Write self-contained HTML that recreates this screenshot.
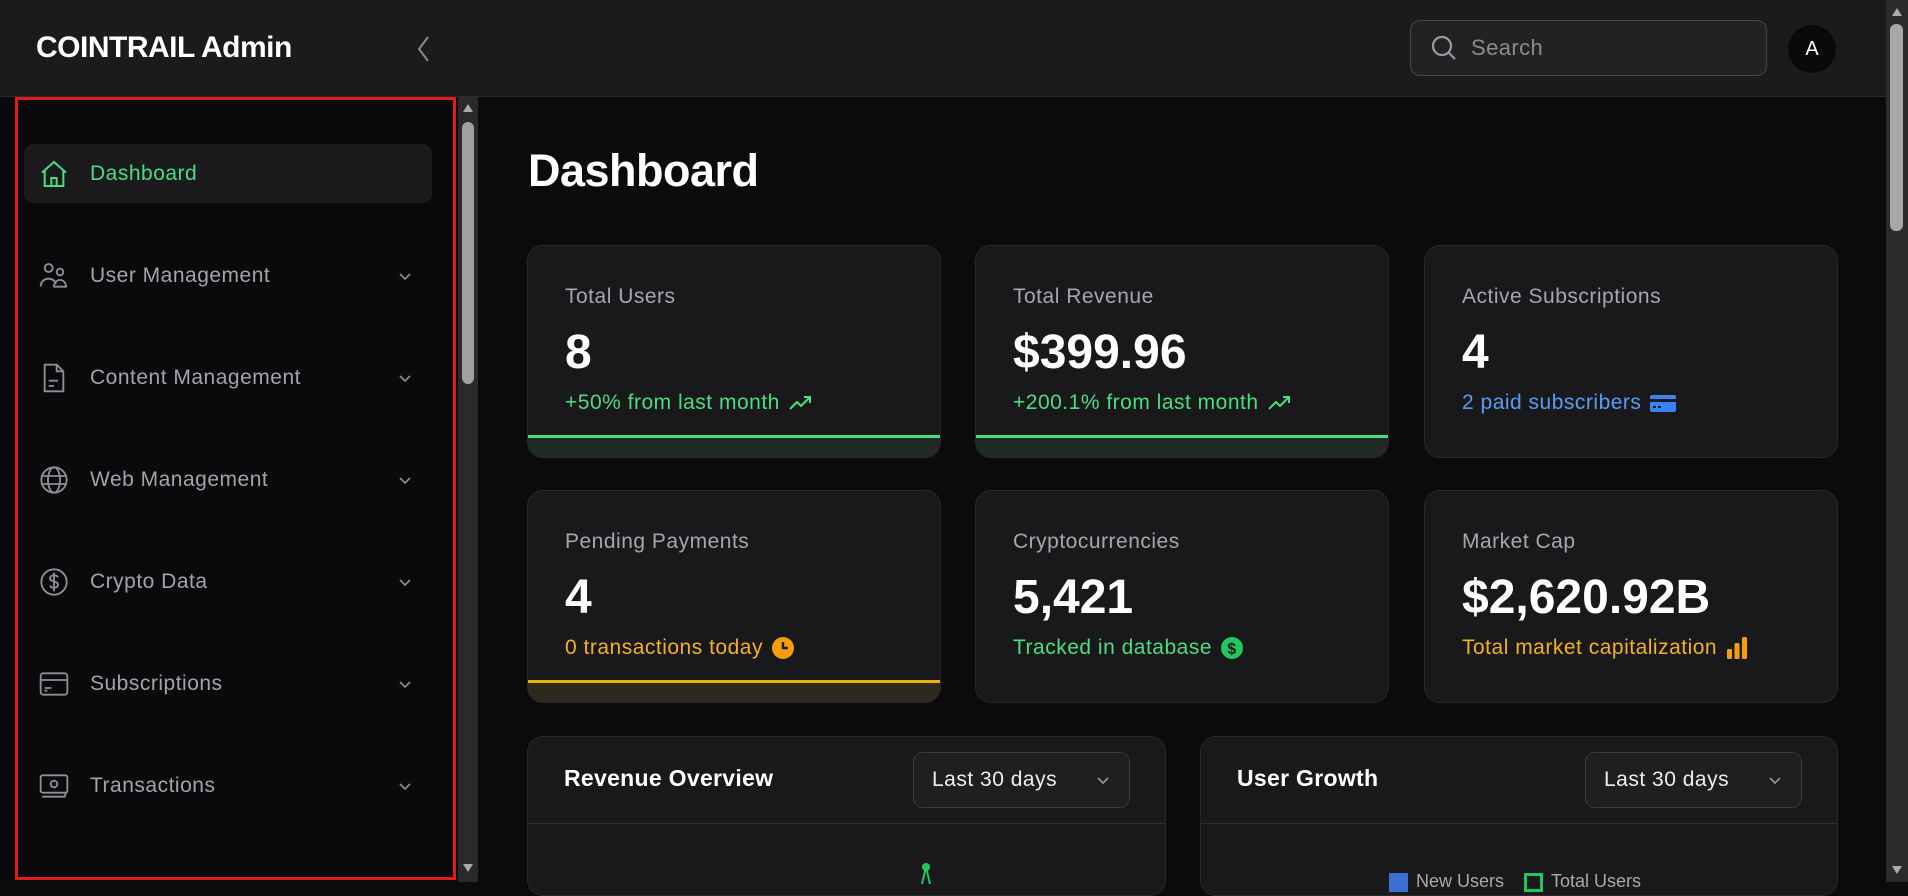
<!DOCTYPE html>
<html><head><meta charset="utf-8"><style>
*{box-sizing:border-box;margin:0;padding:0}
body{width:1908px;height:882px;overflow:hidden;background:#0b0b0d;font-family:"Liberation Sans",sans-serif;position:relative;color:#fff}
.abs{position:absolute}
.hdr{left:0;top:0;width:1886px;height:97px;background:#1b1b1d;border-bottom:1px solid #2a2a2c}
.side{left:0;top:97px;width:458px;height:785px;background:#0a0a0c}
.nav{position:absolute;left:24px;width:408px;height:59px;display:flex;align-items:center;font-size:21px;letter-spacing:0.5px;color:#a3a3aa}
.nav svg.ic{position:absolute;left:14px;width:32px;height:32px}
.nav span{position:absolute;left:66px}
.nav .ch{position:absolute;left:373px;width:16px;height:16px}
.card{position:absolute;width:414px;height:213px;background:#19191b;border:1px solid #28282b;border-radius:16px;overflow:hidden}
.card .l{position:absolute;left:37px;top:39px;font-size:21px;letter-spacing:0.5px;color:#a6a6ad}
.card .v{position:absolute;left:37px;top:79px;font-size:48px;font-weight:bold;color:#fff}
.card .s{position:absolute;left:37px;top:145px;font-size:21px;letter-spacing:0.5px;display:flex;align-items:center;gap:8px}
.bar{position:absolute;left:0;bottom:0;width:100%;height:22px}
.sel{position:absolute;width:217px;height:56px;border:1px solid #3a3a3e;border-radius:10px;background:#1f1f22;font-size:21px;letter-spacing:0.5px;color:#eee;padding:0 18px;display:flex;align-items:center;justify-content:space-between}
</style></head><body>
<div class="abs hdr"></div>
<div class="abs" style="left:36px;top:31px;font-size:30px;font-weight:bold;letter-spacing:-0.5px">COINTRAIL Admin</div>
<svg class="abs" style="left:414px;top:34px" width="20" height="30" viewBox="0 0 20 30"><path d="M14 3 L5 15 L14 27" fill="none" stroke="#8a8a90" stroke-width="2"/></svg>
<div class="abs" style="left:1410px;top:20px;width:357px;height:56px;border:1px solid #46464a;border-radius:10px;background:#222224"></div>
<svg class="abs" style="left:1430px;top:34px" width="28" height="28" viewBox="0 0 28 28"><circle cx="12" cy="12" r="9" fill="none" stroke="#9a9aa0" stroke-width="2.2"/><path d="M19 19 L25 25" stroke="#9a9aa0" stroke-width="2.2"/></svg>
<div class="abs" style="left:1471px;top:35px;font-size:22px;letter-spacing:0.4px;color:#8b8b90">Search</div>
<div class="abs" style="left:1788px;top:25px;width:48px;height:48px;border-radius:50%;background:#0a0a0a;color:#fff;font-size:20px;display:flex;align-items:center;justify-content:center">A</div>
<div class="abs" style="left:1886px;top:0;width:22px;height:882px;background:#2b2b2d"></div>
<div class="abs" style="left:1890px;top:24px;width:13px;height:207px;background:#a8a8a8;border-radius:6px"></div>
<div class="abs" style="left:1892px;top:8px;width:0;height:0;border-left:5px solid transparent;border-right:5px solid transparent;border-bottom:8px solid #aaa"></div>
<div class="abs" style="left:1892px;top:866px;width:0;height:0;border-left:5px solid transparent;border-right:5px solid transparent;border-top:8px solid #aaa"></div>

<div class="abs side"></div>
<div class="abs" style="left:458px;top:97px;width:20px;height:785px;background:#2a2a2c"></div>
<div class="abs" style="left:462px;top:122px;width:12px;height:262px;background:#a0a0a0;border-radius:6px"></div>
<div class="abs" style="left:463px;top:104px;border-left:5px solid transparent;border-right:5px solid transparent;border-bottom:8px solid #aaa"></div>
<div class="abs" style="left:463px;top:864px;border-left:5px solid transparent;border-right:5px solid transparent;border-top:8px solid #aaa"></div>

<div class="nav" style="top:144px;background:#1b1b1d;border-radius:10px;color:#4ade80">
<svg class="ic" viewBox="0 0 24 24" fill="none" stroke="#4ade80" stroke-width="1.5"><path d="M3 11 L12 3 L21 11 M5 9.5 V21 H19 V9.5 M10 21 V15 H14 V21"/></svg><span>Dashboard</span></div>
<div class="nav" style="top:246px"><svg class="ic" viewBox="0 0 24 24" fill="none" stroke="#8e8e95" stroke-width="1.4"><circle cx="8" cy="6" r="3"/><circle cx="16.5" cy="9" r="2.5"/><path d="M2 20c0-4 3-6 6-6s5 2 5.5 4M12 20c0-3 2-5 4.5-5s4.5 2 4.5 5z"/></svg><span>User Management</span><svg class="ch" viewBox="0 0 16 16"><path d="M3 6 L8 11 L13 6" fill="none" stroke="#8e8e95" stroke-width="1.6"/></svg></div>
<div class="nav" style="top:348px"><svg class="ic" viewBox="0 0 24 24" fill="none" stroke="#8e8e95" stroke-width="1.4"><path d="M5 2 H14 L19 7 V22 H5 Z M14 2 V7 H19 M8 14 H15 M8 18 H12"/></svg><span>Content Management</span><svg class="ch" viewBox="0 0 16 16"><path d="M3 6 L8 11 L13 6" fill="none" stroke="#8e8e95" stroke-width="1.6"/></svg></div>
<div class="nav" style="top:450px"><svg class="ic" viewBox="0 0 24 24" fill="none" stroke="#8e8e95" stroke-width="1.4"><circle cx="12" cy="12" r="9.5"/><ellipse cx="12" cy="12" rx="4.5" ry="9.5"/><path d="M2.5 9 H21.5 M2.5 15 H21.5"/></svg><span>Web Management</span><svg class="ch" viewBox="0 0 16 16"><path d="M3 6 L8 11 L13 6" fill="none" stroke="#8e8e95" stroke-width="1.6"/></svg></div>
<div class="nav" style="top:552px"><svg class="ic" viewBox="0 0 24 24" fill="none" stroke="#8e8e95" stroke-width="1.4"><circle cx="12" cy="12" r="9.5"/><path d="M15 8.5c-.5-1-1.5-1.5-3-1.5-2 0-3 1-3 2.3 0 3 6 1.7 6 4.7 0 1.3-1 2.3-3 2.3-1.5 0-2.6-.6-3-1.6M12 5 V19"/></svg><span>Crypto Data</span><svg class="ch" viewBox="0 0 16 16"><path d="M3 6 L8 11 L13 6" fill="none" stroke="#8e8e95" stroke-width="1.6"/></svg></div>
<div class="nav" style="top:654px"><svg class="ic" viewBox="0 0 24 24" fill="none" stroke="#8e8e95" stroke-width="1.4"><rect x="2" y="4" width="20" height="16" rx="2"/><path d="M2 9 H22 M5 15 H10 M5 17 H7"/></svg><span>Subscriptions</span><svg class="ch" viewBox="0 0 16 16"><path d="M3 6 L8 11 L13 6" fill="none" stroke="#8e8e95" stroke-width="1.6"/></svg></div>
<div class="nav" style="top:756px"><svg class="ic" viewBox="0 0 24 24" fill="none" stroke="#8e8e95" stroke-width="1.4"><rect x="2" y="4" width="20" height="13" rx="1.5"/><circle cx="12" cy="10.5" r="2.5"/><path d="M3 20 H20 L21 17"/></svg><span>Transactions</span><svg class="ch" viewBox="0 0 16 16"><path d="M3 6 L8 11 L13 6" fill="none" stroke="#8e8e95" stroke-width="1.6"/></svg></div>
<div class="abs" style="left:15px;top:97px;width:441px;height:783px;border:3px solid #e41b1b"></div>

<div class="abs" style="left:528px;top:145px;font-size:45px;font-weight:bold;letter-spacing:-0.5px">Dashboard</div>

<div class="card" style="left:527px;top:245px"><div class="l">Total Users</div><div class="v">8</div><div class="s" style="color:#4ade80">+50% from last month <svg width="26" height="18" viewBox="0 0 26 18"><path d="M2 15 L9 8 L13 12 L22 3 M16 3 H22 V9" fill="none" stroke="#4ade80" stroke-width="2"/></svg></div><div class="bar" style="background:#1f2b23;border-top:3px solid #4ade80"></div></div>
<div class="card" style="left:975px;top:245px"><div class="l">Total Revenue</div><div class="v">$399.96</div><div class="s" style="color:#4ade80">+200.1% from last month <svg width="26" height="18" viewBox="0 0 26 18"><path d="M2 15 L9 8 L13 12 L22 3 M16 3 H22 V9" fill="none" stroke="#4ade80" stroke-width="2"/></svg></div><div class="bar" style="background:#1f2b23;border-top:3px solid #4ade80"></div></div>
<div class="card" style="left:1424px;top:245px"><div class="l">Active Subscriptions</div><div class="v">4</div><div class="s" style="color:#5b9bf8">2 paid subscribers <svg width="28" height="20" viewBox="0 0 28 20"><rect x="1" y="2" width="26" height="17" rx="2" fill="#3b82f6"/><rect x="1" y="6" width="26" height="3" fill="#1a1a1c"/><rect x="4" y="13" width="3" height="2" fill="#1a1a1c"/><rect x="9" y="13" width="3" height="2" fill="#1a1a1c"/></svg></div></div>

<div class="card" style="left:527px;top:490px"><div class="l">Pending Payments</div><div class="v">4</div><div class="s" style="color:#f5b021">0 transactions today <svg width="24" height="24" viewBox="0 0 24 24"><circle cx="12" cy="12" r="11" fill="#f59e0b"/><path d="M12 6 V12 H17" fill="none" stroke="#1a1a1c" stroke-width="2.4"/></svg></div><div class="bar" style="background:#2f291d;border-top:3px solid #eab308"></div></div>
<div class="card" style="left:975px;top:490px"><div class="l">Cryptocurrencies</div><div class="v">5,421</div><div class="s" style="color:#4ade80">Tracked in database <svg width="24" height="24" viewBox="0 0 24 24"><circle cx="12" cy="12" r="11" fill="#22c55e"/><text x="12" y="18" text-anchor="middle" font-size="16" font-weight="bold" fill="#1a1a1c" font-family="Liberation Sans">$</text></svg></div></div>
<div class="card" style="left:1424px;top:490px"><div class="l">Market Cap</div><div class="v">$2,620.92B</div><div class="s" style="color:#f5b021">Total market capitalization <svg width="24" height="24" viewBox="0 0 24 24"><rect x="2" y="13" width="5" height="10" rx="1.5" fill="#f59e0b"/><rect x="9.5" y="7" width="5" height="16" rx="1.5" fill="#f59e0b"/><rect x="17" y="1" width="5" height="22" rx="1.5" fill="#f59e0b"/></svg></div></div>

<div class="abs" style="left:527px;top:736px;width:639px;height:160px;background:#19191b;border:1px solid #28282b;border-radius:16px"></div>
<div class="abs" style="left:528px;top:823px;width:637px;height:1px;background:#2e2e31"></div>
<div class="abs" style="left:564px;top:765px;font-size:23px;letter-spacing:0.3px;font-weight:bold">Revenue Overview</div>
<div class="sel" style="left:913px;top:752px">Last 30 days<svg width="16" height="16" viewBox="0 0 16 16"><path d="M3 6 L8 11 L13 6" fill="none" stroke="#999" stroke-width="1.6"/></svg></div>
<svg class="abs" style="left:916px;top:862px" width="20" height="22" viewBox="0 0 20 22"><circle cx="10" cy="5" r="4" fill="#22c55e"/><path d="M10 5 L6 22 M10 5 L14 22" stroke="#22c55e" stroke-width="2"/></svg>

<div class="abs" style="left:1200px;top:736px;width:638px;height:160px;background:#19191b;border:1px solid #28282b;border-radius:16px"></div>
<div class="abs" style="left:1201px;top:823px;width:636px;height:1px;background:#2e2e31"></div>
<div class="abs" style="left:1237px;top:765px;font-size:23px;letter-spacing:0.3px;font-weight:bold">User Growth</div>
<div class="sel" style="left:1585px;top:752px">Last 30 days<svg width="16" height="16" viewBox="0 0 16 16"><path d="M3 6 L8 11 L13 6" fill="none" stroke="#999" stroke-width="1.6"/></svg></div>
<div class="abs" style="left:1389px;top:873px;width:19px;height:19px;background:#3b6fd4"></div>
<div class="abs" style="left:1416px;top:871px;font-size:18px;color:#aaa">New Users</div>
<div class="abs" style="left:1524px;top:873px;width:19px;height:19px;border:3px solid #22c55e"></div>
<div class="abs" style="left:1551px;top:871px;font-size:18px;color:#aaa">Total Users</div>
</body></html>
